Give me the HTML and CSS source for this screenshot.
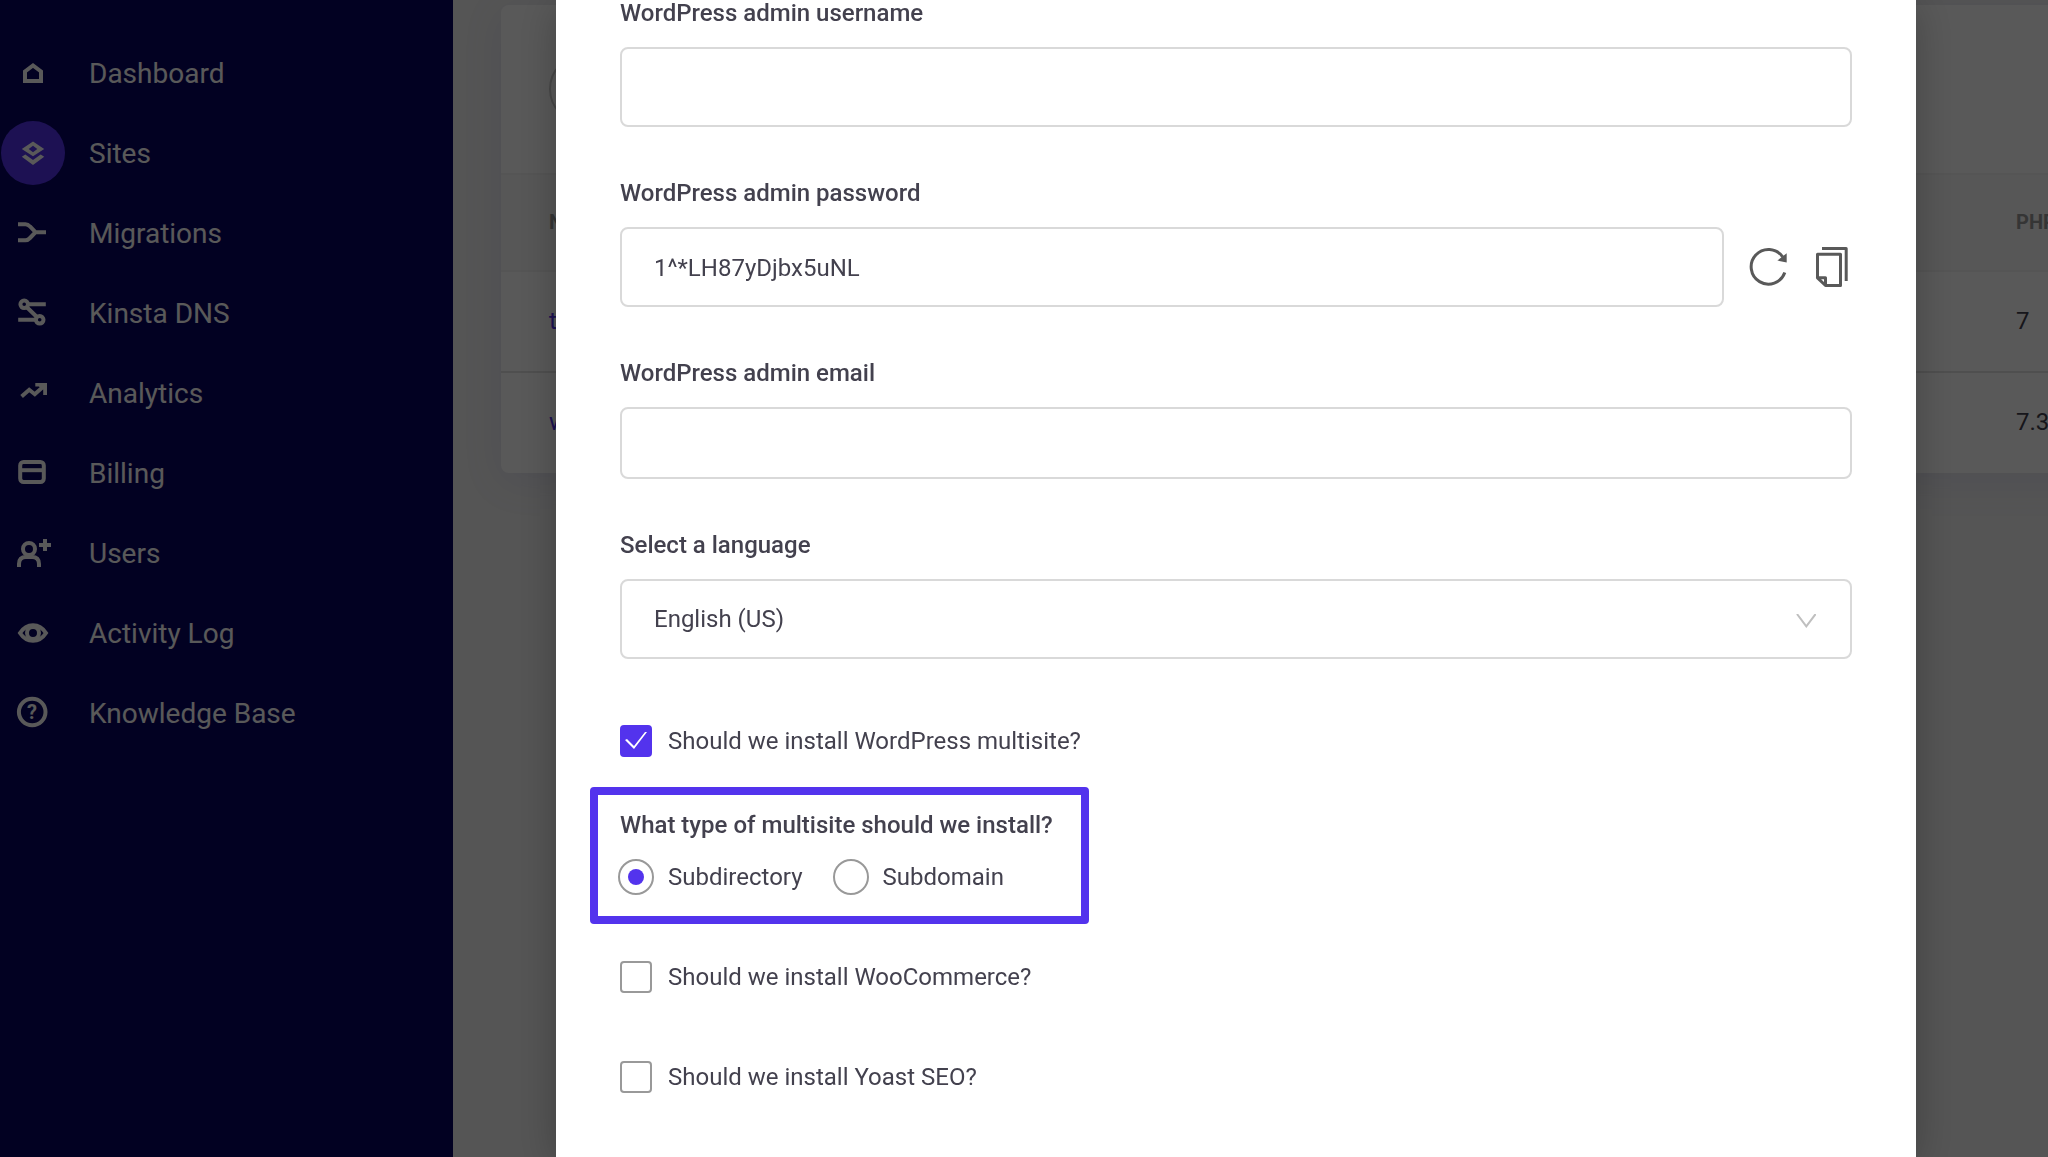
FILE: index.html
```html
<!DOCTYPE html>
<html lang="en">
<head>
<meta charset="utf-8">
<title>Add site</title>
<link rel="stylesheet" href="styles.css">
</head>
<body>
<div class="app">
  <nav class="sidebar">
    <a class="nav-item" href="#"><span class="nav-icon"><svg viewBox="0 0 64 64" aria-hidden="true"><path class="line" d="M24 40V30.4L32 24.4L40 30.4V40Z"/></svg></span><span class="nav-text">Dashboard</span></a>
    <a class="nav-item" href="#"><span class="nav-icon nav-icon-active"><svg viewBox="0 0 64 64" aria-hidden="true"><path class="solid" d="M32 20.5L43.2 28L32 35.3L20.8 28ZM32 24.8L27.7 28L32 31.3L36.3 28Z"/><path class="solid" d="M20.8 35.7L24.3 33.4L32 39L39.7 33.4L43.2 35.7L32 44Z"/></svg></span><span class="nav-text">Sites</span></a>
    <a class="nav-item" href="#"><span class="nav-icon"><svg viewBox="0 0 64 64" aria-hidden="true"><path class="line" d="M17 23.3H24.5Q27 23.3 29 25.5L34.5 31.2L29 37Q27 39.2 24.5 39.2H17M34 31.2H45"/></svg></span><span class="nav-text">Migrations</span></a>
    <a class="nav-item" href="#"><span class="nav-icon"><svg viewBox="0 0 64 64" aria-hidden="true"><circle class="line" cx="23.2" cy="23.3" r="3.8"/><circle class="line" cx="38.7" cy="38.8" r="3.8"/><path class="line" d="M27 23.3H44.8M35 38.8H17.2M25.6 26L36.2 36.2"/></svg></span><span class="nav-text">Kinsta DNS</span></a>
    <a class="nav-item" href="#"><span class="nav-icon"><svg viewBox="0 0 64 64" aria-hidden="true"><path class="line" d="M20.6 35.4L28.2 28.8L33.8 33.2L43 25"/><path class="solid" d="M34.3 22H46V34H42.2V28.4L37.8 25.6H34.3Z"/></svg></span><span class="nav-text">Analytics</span></a>
    <a class="nav-item" href="#"><span class="nav-icon"><svg viewBox="0 0 64 64" aria-hidden="true"><rect class="line" x="19.2" y="21" width="23.6" height="20" rx="3.4"/><path class="line" d="M19 29.2H43"/></svg></span><span class="nav-text">Billing</span></a>
    <a class="nav-item" href="#"><span class="nav-icon"><svg viewBox="0 0 64 64" aria-hidden="true"><circle class="line" cx="28" cy="28" r="6"/><path class="line" d="M18 46V43Q18 36 25 36H31Q38 36 38 43V46M44 18V30M38 24H50"/></svg></span><span class="nav-text">Users</span></a>
    <a class="nav-item" href="#"><span class="nav-icon"><svg viewBox="0 0 64 64" aria-hidden="true"><path class="line" d="M19 32Q24 24.2 32 24.2T45 32Q40 39.8 32 39.8T19 32Z"/><circle class="line" cx="32" cy="32" r="6"/></svg></span><span class="nav-text">Activity Log</span></a>
    <a class="nav-item" href="#"><span class="nav-icon"><svg viewBox="0 0 64 64" aria-hidden="true"><circle class="line" cx="31.2" cy="31" r="13.3"/><text class="mark" x="31" y="38" text-anchor="middle">?</text></svg></span><span class="nav-text">Knowledge Base</span></a>
  </nav>
  <main class="main">
    <section class="card">
      <div class="filter"><input class="search" type="search" aria-label="Search sites"></div>
      <table class="sites">
        <colgroup><col><col class="col-php"></colgroup>
        <thead><tr><th>Name</th><th>PHP</th></tr></thead>
        <tbody>
          <tr><td><a href="#">t</a></td><td>7</td></tr>
          <tr><td><a href="#">w</a></td><td>7.3</td></tr>
        </tbody>
      </table>
    </section>
  </main>
</div>

<div class="overlay">
  <form class="modal" role="dialog" aria-label="Add site">
    <div class="field">
      <label class="label" for="user">WordPress admin username</label>
      <input class="control" id="user" type="text">
    </div>
    <div class="field">
      <label class="label" for="pass">WordPress admin password</label>
      <div class="control-row">
        <input class="control" id="pass" type="text" value="1^*LH87yDjbx5uNL">
        <button class="icon-button" type="button" aria-label="Generate password"><svg viewBox="0 0 40 40" aria-hidden="true"><path d="M36.8 25.5A17.3 17.3 0 1 1 34.6 9.8"/><path class="tip" d="M38.7 6.2V15.4L29.4 13.6Z"/></svg></button>
        <button class="icon-button" type="button" aria-label="Copy password"><svg viewBox="0 0 40 40" aria-hidden="true"><path d="M10 1.5H34.2V34M5.5 30.8V7.2H28.5V38.5H13.5L5.5 30.8H13.5V38.5"/></svg></button>
      </div>
    </div>
    <div class="field">
      <label class="label" for="email">WordPress admin email</label>
      <input class="control control-short" id="email" type="email">
    </div>
    <div class="field">
      <label class="label" for="lang">Select a language</label>
      <div class="select">
        <select class="control" id="lang"><option>English (US)</option></select>
        <svg class="chevron" viewBox="0 0 20 14" aria-hidden="true"><path d="M1 0L10.3 12.4L19.6 0"/></svg>
      </div>
    </div>
    <label class="check check-first"><input type="checkbox" checked>Should we install WordPress multisite?</label>
    <fieldset class="highlight">
      <div class="label" id="type">What type of multisite should we install?</div>
      <div class="radios" role="radiogroup" aria-labelledby="type">
        <label class="radio"><input type="radio" name="type" checked>Subdirectory</label>
        <label class="radio"><input type="radio" name="type">Subdomain</label>
      </div>
    </fieldset>
    <label class="check"><input type="checkbox">Should we install WooCommerce?</label>
    <label class="check"><input type="checkbox">Should we install Yoast SEO?</label>
  </form>
</div>
</body>
</html>
```

FILE: styles.css
```css
* { box-sizing: border-box; }

body {
  margin: 0;
  font-family: Roboto, "Liberation Sans", sans-serif;
  font-size: 24px;
  line-height: 32px;
  color: #43414e;
  background: #f2f2f2;
  overflow: hidden;
}

input, select, button { font: inherit; color: inherit; margin: 0; }

.app { display: flex; height: 100vh; }

/* Sidebar */
.sidebar {
  flex: 0 0 453px;
  display: flex;
  flex-direction: column;
  gap: 16px;
  padding: 41px 0 0 1px;
  background: #080361;
}
.nav-item {
  display: flex;
  align-items: center;
  gap: 24px;
  height: 64px;
  font-size: 28px;
  color: #fff;
  text-decoration: none;
}
.nav-text { padding-top: 2px; }
.nav-icon { width: 64px; height: 64px; border-radius: 50%; }
.nav-icon-active { background: #5333ed; }
.nav-icon svg { display: block; width: 64px; height: 64px; }
.line { fill: none; stroke: #fff; stroke-width: 4; }
.solid { fill: #fff; fill-rule: evenodd; }
.mark { fill: #fff; font-size: 20px; font-weight: 700; }

/* Sites list behind the dialog */
.main { flex: 1; min-width: 0; overflow: hidden; padding: 5px 0 0 48px; }
.card {
  margin-right: -120px;
  background: #fff;
  border-radius: 8px;
  box-shadow: 0 8px 40px rgba(80, 80, 200, 0.1);
}
.filter { padding: 49px 48px; border-bottom: 2px solid #f2f2f2; }
.search {
  display: block;
  width: 400px;
  height: 70px;
  border: 2px solid #ccc;
  border-radius: 35px;
  background: none;
}
.sites { width: 100%; table-layout: fixed; border-collapse: separate; border-spacing: 0; }
.col-php { width: 152px; }
.sites th, .sites td { padding: 0 0 2px; text-align: left; border-bottom: 2px solid #e2e2e2; }
.sites th:first-child, .sites td:first-child { padding-left: 48px; }
.sites th {
  height: 97px;
  font-size: 20px;
  font-weight: 700;
  text-transform: uppercase;
  color: #999;
  background: #f8f8f8;
  border-color: #f2f2f2;
}
.sites td { height: 101px; }
.sites tr:last-child td { height: 100px; border-bottom: 0; }
.sites a { color: #5333ed; text-decoration: none; }

/* Dialog */
.overlay {
  position: fixed;
  inset: 0;
  display: flex;
  overflow: hidden;
  padding: 0 132px 0 556px;
  background: rgba(0, 0, 0, 0.65);
}
.modal {
  flex: 1;
  display: flex;
  flex-direction: column;
  align-items: flex-start;
  margin-top: -3px;
  padding: 0 64px;
  background: #fff;
  box-shadow: 0 8px 40px rgba(0, 0, 0, 0.25);
}
.field { width: 100%; margin-bottom: 50px; }
.label { display: block; font-weight: 500; }
.field .label { margin-bottom: 18px; }
.control {
  display: block;
  width: 100%;
  height: 80px;
  padding: 0 32px;
  border: 2px solid #d9d9d9;
  border-radius: 8px;
  background: #fff;
  appearance: none;
}
input.control { padding-top: 2px; }
.control-short { height: 72px; }
.control-row { display: flex; align-items: center; gap: 24px; }
.control-row .control { flex: 1; min-width: 0; }
.icon-button { width: 40px; height: 40px; padding: 0; border: 0; background: none; }
.icon-button svg { display: block; fill: none; stroke: #595959; stroke-width: 3; stroke-linejoin: round; }
.icon-button .tip { fill: #595959; stroke: none; }
.select { display: grid; align-items: center; }
.select > * { grid-area: 1 / 1; }
.chevron {
  justify-self: end;
  width: 20px;
  height: 14px;
  margin: 4px 36px 0 0;
  fill: none;
  stroke: #bfbfbf;
  stroke-width: 2;
  pointer-events: none;
}

.check, .radio { display: flex; align-items: center; }
.check { gap: 16px; margin-bottom: 68px; }
.check-first { margin: 16px 0 30px; }
.check input {
  display: grid;
  place-items: center;
  width: 32px;
  height: 32px;
  border: 2px solid #999;
  border-radius: 4px;
  appearance: none;
}
.check input:checked { border-color: #5333ed; background: #5333ed; }
.check input:checked::before {
  content: "";
  width: 24px;
  height: 20px;
  background: #fff;
  clip-path: polygon(1px 9px, 3px 8px, 10px 15px, 21px 1px, 23px 1px, 10px 18px);
}

.highlight {
  min-width: 0;
  margin: 0 0 37px -30px;
  padding: 14px 28px 21px 22px;
  border: 8px solid #5333ed;
  border-radius: 4px;
}
.radios { display: flex; gap: 30px; margin: 18px 0 0 -2px; }
.radio { gap: 14px; }
.radio input {
  display: grid;
  place-items: center;
  width: 36px;
  height: 36px;
  border: 2px solid #999;
  border-radius: 50%;
  appearance: none;
}
.radio input:checked::before {
  content: "";
  width: 16px;
  height: 16px;
  border-radius: 50%;
  background: #5333ed;
}
```
